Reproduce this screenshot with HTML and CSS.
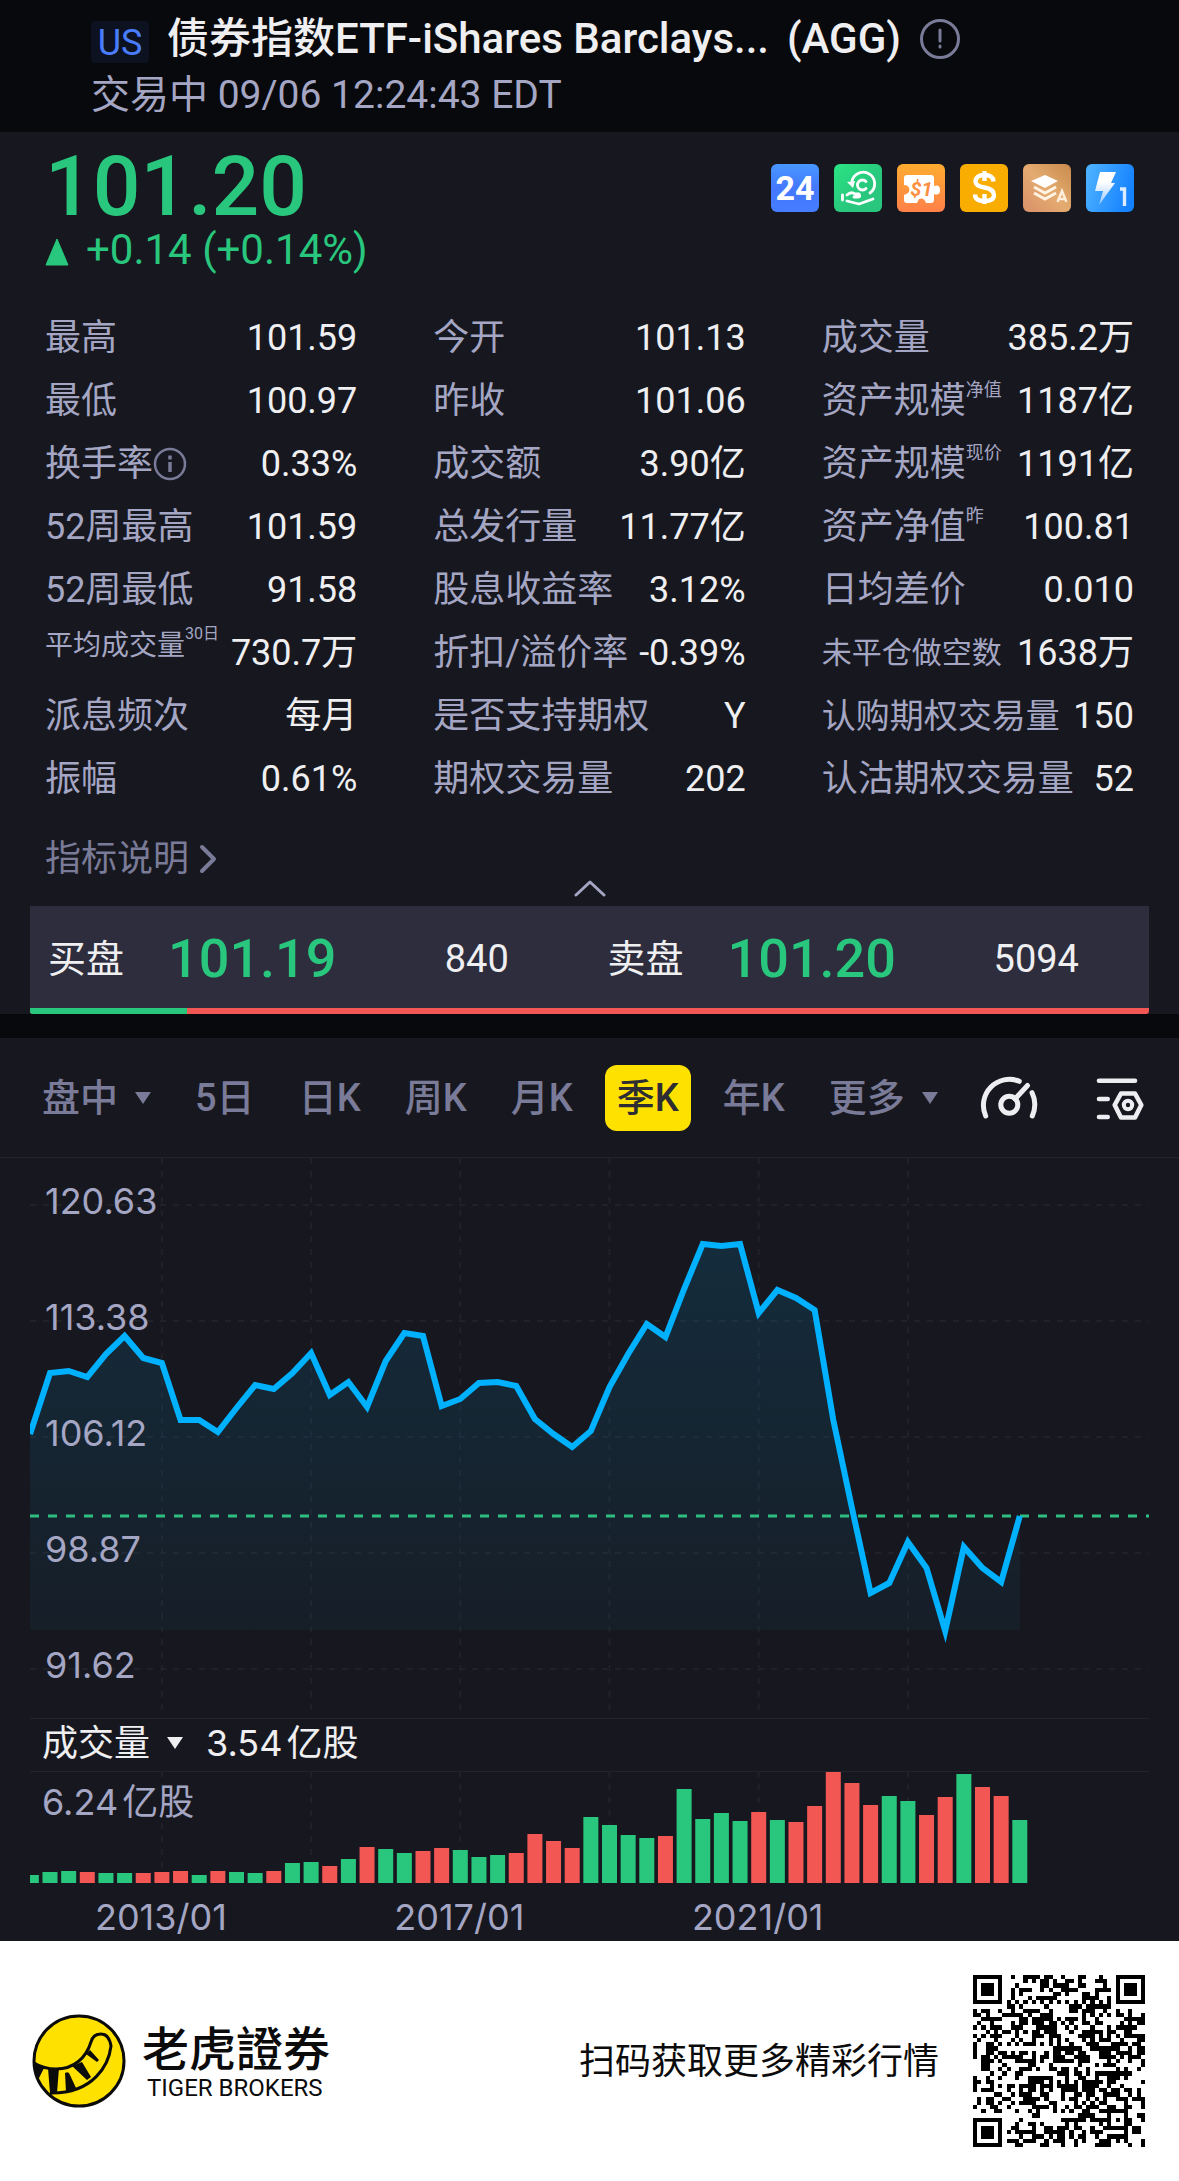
FILE: index.html
```html
<!DOCTYPE html>
<html lang="zh-CN">
<head>
<meta charset="utf-8">
<meta name="viewport" content="width=device-width, initial-scale=1">
<title>AGG</title>
<link rel="stylesheet" href="styles.css">
</head>
<body>
<header class="top">
  <div class="top-title">
    <span class="market">US</span>
    <h1 class="name">债券指数ETF-iShares Barclays...</h1>
    <span class="name">(AGG)</span>
    <svg class="info-lg" viewBox="0 0 42 42" fill="none" stroke="#7a7b98" stroke-width="3" stroke-linecap="round"><circle cx="21" cy="21" r="18.5"/><path d="M21 12v11M21 28v1"/></svg>
  </div>
  <p class="status">交易中 09/06 12:24:43 EDT</p>
</header>

<main>
<section class="quote">
  <div class="quote-head">
    <div>
      <p class="price">101.20</p>
      <p class="change"><svg class="up" viewBox="0 0 24 28"><path d="M12 1 23 27H1z" fill="#28c77d" stroke="#28c77d" stroke-linejoin="round"/></svg>+0.14 (+0.14%)</p>
    </div>
    <div class="badges">
      <svg class="badge" viewBox="0 0 48 48"><defs><linearGradient id="b1" x1="0" y1="0" x2="0" y2="1"><stop offset="0" stop-color="#4798ff"/><stop offset=".5" stop-color="#4478ff"/><stop offset="1" stop-color="#467dff"/></linearGradient></defs><rect width="48" height="48" rx="6" fill="url(#b1)"/><text x="24" y="36" text-anchor="middle" class="badge-24">24</text></svg>
      <svg class="badge" viewBox="0 0 48 48"><defs><linearGradient id="b2" x1="0" y1="0" x2="1" y2="1"><stop offset="0" stop-color="#2be583"/><stop offset=".6" stop-color="#28c77d"/></linearGradient></defs><rect width="48" height="48" rx="6" fill="url(#b2)"/><g fill="none" stroke="#fff" stroke-width="2.8" stroke-linecap="round" stroke-linejoin="round"><path d="M18 17a11.500 11.500 0 1 1 18 12"/><path d="M32 17.500a5 5 0 1 0 0 7"/><path d="M8.500 31v5M13 31q4-4 8-1h4q2 3-1 3h-4M13 37l12 3 14-5"/></g><path d="M13 18l8-1-2 7z" fill="#fff"/></svg>
      <svg class="badge" viewBox="0 0 48 48"><defs><linearGradient id="b3" x1="0" y1="0" x2="0" y2="1"><stop offset="0" stop-color="#ffac30"/><stop offset="1" stop-color="#ff8048"/></linearGradient></defs><rect width="48" height="48" rx="6" fill="url(#b3)"/><path fill="#fff" d="M10 11H34Q37 11 37 14V22Q43 20 43 26T37 30V36Q37 39 34 39H29Q27 33 22 35L20 39H10Q7 39 7 36V31Q14 29 12 24Q11 21 7 21V14Q7 11 10 11z"/><text x="24.500" y="32" text-anchor="middle" class="badge-s1">$1</text></svg>
      <svg class="badge" viewBox="0 0 48 48"><rect width="48" height="48" rx="6" fill="#f9ad00"/><g fill="none" stroke="#fff" stroke-width="4.400"><path d="M33.500 17.500Q33 11 24.500 11T15.500 17.500Q15.500 22 24.500 23.500T34 31Q34 37 24.500 37T15 30.500"/><path d="M24.500 7v10M24.500 30v10"/></g></svg>
      <svg class="badge" viewBox="0 0 48 48"><defs><linearGradient id="b5" x1="0" y1="1" x2="1" y2="0"><stop offset="0" stop-color="#d9906a"/><stop offset=".5" stop-color="#e4ab70"/><stop offset="1" stop-color="#c98a4c"/></linearGradient></defs><rect width="48" height="48" rx="6" fill="url(#b5)"/><path d="M22 11 35 17 22 24 8 17z" fill="#fff"/><g fill="none" stroke="#fff3e4" stroke-width="3"><path d="M11 23l11 6 11-6M11 29l11 6 11-6"/></g><path d="M34.500 38l4.500-11 4.500 11M36 35h6" fill="none" stroke="#ffeedb" stroke-width="2.400"/></svg>
      <svg class="badge" viewBox="0 0 48 48"><defs><linearGradient id="b6" x1="0" y1=".2" x2="1" y2=".5"><stop offset="0" stop-color="#4db2ff"/><stop offset="1" stop-color="#1481ff"/></linearGradient><linearGradient id="b6b" x1="0" y1="0" x2="0" y2="1"><stop offset=".3" stop-color="#fff"/><stop offset="1" stop-color="#9cc8ff"/></linearGradient></defs><rect width="48" height="48" rx="6" fill="url(#b6)"/><path d="M14 8H30L25 19H29L13 41 17 27H9z" fill="url(#b6b)"/><path d="M34 25h4.500v17" fill="none" stroke="#dcecff" stroke-width="3.400"/></svg>
    </div>
  </div>

  <dl class="stats">
    <div class="stat"><dt>最高</dt><dd>101.59</dd></div>
    <div class="stat"><dt>今开</dt><dd>101.13</dd></div>
    <div class="stat"><dt>成交量</dt><dd>385.2万</dd></div>
    <div class="stat"><dt>最低</dt><dd>100.97</dd></div>
    <div class="stat"><dt>昨收</dt><dd>101.06</dd></div>
    <div class="stat"><dt>资产规模<small>净值</small></dt><dd>1187亿</dd></div>
    <div class="stat"><dt>换手率<svg class="info-sm" viewBox="0 0 34 34" fill="none" stroke="#7a7b98" stroke-width="2.500"><circle cx="17" cy="17" r="15"/><path d="M17 15v10M17 8.500v4" stroke-width="3.500"/></svg></dt><dd>0.33%</dd></div>
    <div class="stat"><dt>成交额</dt><dd>3.90亿</dd></div>
    <div class="stat"><dt>资产规模<small>现价</small></dt><dd>1191亿</dd></div>
    <div class="stat"><dt>52周最高</dt><dd>101.59</dd></div>
    <div class="stat"><dt>总发行量</dt><dd>11.77亿</dd></div>
    <div class="stat"><dt>资产净值<small>昨</small></dt><dd>100.81</dd></div>
    <div class="stat"><dt>52周最低</dt><dd>91.58</dd></div>
    <div class="stat"><dt>股息收益率</dt><dd>3.12%</dd></div>
    <div class="stat"><dt>日均差价</dt><dd>0.010</dd></div>
    <div class="stat"><dt class="fit-s">平均成交量<small>30日</small></dt><dd>730.7万</dd></div>
    <div class="stat"><dt>折扣/溢价率</dt><dd>-0.39%</dd></div>
    <div class="stat"><dt class="fit-m">未平仓做空数</dt><dd>1638万</dd></div>
    <div class="stat"><dt>派息频次</dt><dd>每月</dd></div>
    <div class="stat"><dt>是否支持期权</dt><dd>Y</dd></div>
    <div class="stat"><dt class="fit-l">认购期权交易量</dt><dd>150</dd></div>
    <div class="stat"><dt>振幅</dt><dd>0.61%</dd></div>
    <div class="stat"><dt>期权交易量</dt><dd>202</dd></div>
    <div class="stat"><dt>认沽期权交易量</dt><dd>52</dd></div>
  </dl>

  <a class="explain" href="#">指标说明<svg class="chev" viewBox="0 0 18 30" fill="none" stroke="#7a7b98" stroke-width="4" stroke-linecap="round" stroke-linejoin="round"><path d="M3 3l12 12L3 27"/></svg></a>
  <button class="collapse" type="button" aria-label="收起"><svg viewBox="0 0 32 18" fill="none" stroke="#a4a6c4" stroke-width="3" stroke-linecap="round" stroke-linejoin="round"><path d="M2 16 16 3 30 16"/></svg></button>

  <div class="book">
    <div class="side"><span>买盘</span><strong>101.19</strong><span class="size">840</span></div>
    <div class="side"><span>卖盘</span><strong>101.20</strong><span class="size">5094</span></div>
  </div>
  <div class="ratio"><div class="ratio-buy" style="width:14%"></div></div>
</section>

<section class="charts">
  <nav class="periods">
    <button type="button" class="tab">盘中<svg class="tri" viewBox="0 0 16 12"><path d="M0 0h16L8 12z"/></svg></button>
    <button type="button" class="tab">5日</button>
    <button type="button" class="tab">日K</button>
    <button type="button" class="tab">周K</button>
    <button type="button" class="tab">月K</button>
    <button type="button" class="tab tab-on">季K</button>
    <button type="button" class="tab">年K</button>
    <button type="button" class="tab">更多<svg class="tri" viewBox="0 0 16 12"><path d="M0 0h16L8 12z"/></svg></button>
    <div class="tools">
      <button type="button" class="tool" aria-label="指标"><svg viewBox="0 0 62 48" fill="none" stroke="#eeeef2" stroke-width="5" stroke-linecap="round"><path d="M7.700 42A26 26 0 0 1 41.300 7.300M54 18.700Q59.500 30 54.300 42M37 25 49.500 11.500"/><circle cx="31.300" cy="30.700" r="8.500"/></svg></button>
      <button type="button" class="tool" aria-label="设置"><svg viewBox="0 0 52 48" fill="none" stroke="#eeeef2" stroke-width="4.600" stroke-linecap="round" stroke-linejoin="round"><path d="M6 6.700H42M6 25h8.700M6 43h8.700M21.700 31 28 19.500H42L48.300 31 42 43.500H28z"/><circle cx="35" cy="31" r="4.200" stroke-width="4"/></svg></button>
    </div>
  </nav>

  <div class="plots">
    <svg id="price" class="plot" viewBox="0 0 1119 560"></svg>
    <div class="vol-head"><button type="button" class="vol-name">成交量<svg class="tri" viewBox="0 0 16 12"><path d="M0 0h16L8 12z"/></svg></button><span class="amount"><span>3.54</span><span>亿股</span></span></div>
    <svg id="volume" class="plot" viewBox="0 0 1119 170"></svg>
  </div>
</section>
</main>

<footer class="foot">
  <svg class="logo" viewBox="0 0 94 94"><circle cx="47" cy="47" r="45" fill="#ffe100" stroke="#0b0b0b" stroke-width="3"/><path d="M2 49Q12 55 24 55C42 55 54 44 59 28Q61 20 69 20T79 32C77 50 62 80 18 79" fill="none" stroke="#0b0b0b" stroke-width="3"/><path d="M2 49 12 54 6 66zM16 54h11l-2 25h-7zM33 59q4-2 5 2l6 13-10 4zM40 52l10-4 9 15-4 3zM54 40l4-4 9 10-2 2z" fill="#0b0b0b"/></svg>
  <div class="brand"><span class="brand-zh">老虎證券</span><span class="brand-en">TIGER BROKERS</span></div>
  <p class="scan">扫码获取更多精彩行情</p>
  <svg id="qr" class="qr" viewBox="0 0 41 41" shape-rendering="crispEdges"></svg>
</footer>
<script src="app.js"></script>
</body>
</html>
```
FILE: styles.css
```css
* { box-sizing: border-box; margin: 0; padding: 0; }
body {
  background: #08090c;
  color: #efeff2;
  font-family: Roboto, "Noto Sans CJK SC", sans-serif;
  font-size: 36px;
}
svg { display: block; flex: none; }
button { border: 0; background: none; color: inherit; font: inherit; cursor: pointer; }
a { color: inherit; text-decoration: none; }

.top { height: 132px; padding: 14px 91px 0; }
.top-title { display: flex; align-items: center; gap: 18px; height: 50px; }
.market {
  width: 58px; height: 42px; margin-top: 6px; border-radius: 4px;
  background: #0c1220; color: #4a7dfc;
  font-size: 36px; line-height: 44px; text-align: center;
}
.name { font-size: 42px; line-height: 50px; font-weight: 500; white-space: nowrap; }
.info-lg { width: 42px; height: 42px; }
.status { font-size: 39px; line-height: 62px; color: #a4a6c4; }

.quote { background: #17181f; padding: 0 30px; }
.quote-head { display: flex; justify-content: space-between; padding: 17px 15px 0 15px; height: 174px; }
.price { font-size: 84px; line-height: 76px; font-weight: 500; color: #28c77d; }
.change { display: flex; align-items: center; gap: 17px; font-size: 42px; line-height: 50px; color: #28c77d; }
.up { width: 24px; height: 28px; margin-top: 4px; }
.badges { display: flex; gap: 15px; padding-top: 15px; }
.badge { width: 48px; height: 48px; }
.badge-24 { fill: #fff; font-size: 34px; font-weight: 700; }
.badge-s1 { fill: #ff8f40; font-size: 20px; font-weight: 700; font-style: italic; }

.stats { display: grid; grid-template-columns: repeat(3, 1fr); column-gap: 76px; padding: 0 15px; }
.stat { display: flex; justify-content: space-between; align-items: center; height: 63px; line-height: 54px; white-space: nowrap; }
.stat dt { display: flex; align-items: center; color: #a4a6c4; }
.stat small { align-self: flex-start; font-size: 18px; line-height: 32px; }
.stat .fit-s { font-size: 28px; line-height: 50px; align-self: flex-start; }
.stat .fit-s small { font-size: 16px; line-height: 26px; }
.stat .fit-m { font-size: 30px; }
.stat .fit-l { font-size: 34px; }
.info-sm { width: 34px; height: 34px; }

.explain { display: flex; width: max-content; align-items: center; gap: 10px; margin: 22px 0 0 15px; height: 54px; line-height: 54px; color: #7a7b98; }
.chev { width: 18px; height: 30px; }
.collapse { display: block; width: 32px; height: 18px; margin: -7px auto 9px; }

.book { display: grid; grid-template-columns: 1fr 1fr; height: 102px; background: #2d2d3d; }
.side { display: grid; grid-template-columns: 120px 196px 1fr; align-items: center; padding: 4px 0 0 18px; font-size: 38px; line-height: 56px; }
.side strong { font-size: 54px; font-weight: 500; color: #28c77d; }
.size { text-align: center; }
.ratio { height: 6px; border-radius: 0 0 3px 3px; overflow: hidden; background: #f25754; }
.ratio-buy { height: 6px; background: #28c77d; }

.charts { margin-top: 24px; background: #17181f; }
.periods { display: flex; align-items: center; gap: 20px; height: 120px; padding: 0 30px; border-bottom: 1px solid #22232b; }
.tab { display: flex; align-items: center; gap: 17px; height: 66px; padding: 0 12px; border-radius: 12px; color: #7a7b98; font-size: 38px; line-height: 66px; font-weight: 500; white-space: nowrap; }
.tab-on { background: #ffe100; color: #2d2d33; }
.tri { width: 16px; height: 12px; fill: currentColor; }
.tools { display: flex; flex: 1; justify-content: space-between; padding: 1px 4px 0 8px; }
.tool svg { width: auto; height: 48px; }

.plots { padding: 0 30px; font-family: Inter, "Noto Sans CJK SC", sans-serif; }
.plot { width: 100%; height: auto; }
.plot text { font-size: 36px; fill: #a4a6c4; }
.grid { stroke: #202129; stroke-width: 2; stroke-dasharray: 6 7; }
.rule { stroke: #22232b; stroke-width: 1; }
.last { stroke: #2fbd82; stroke-width: 3; stroke-dasharray: 9 9; }
.line { fill: none; stroke: #00b1ff; stroke-width: 6; stroke-linejoin: miter; }
.vol-head { display: flex; align-items: center; gap: 23px; height: 53px; padding: 0 0 4px 12px; line-height: 49px; border-top: 1px solid #22232b; }
.vol-name { display: flex; align-items: center; gap: 17px; }
.amount { display: flex; gap: 4px; }
.g { fill: #28c77d; }
.r { fill: #f25754; }

.foot { display: flex; align-items: center; padding: 34px 34px 34px 32px; background: #fff; color: #0b0b0b; }
.logo { width: 94px; height: 94px; }
.brand { display: flex; flex-direction: column; margin-left: 16px; }
.brand-zh { font-family: "Noto Sans CJK TC", sans-serif; font-size: 47px; line-height: 54px; font-weight: 500; }
.brand-en { padding-left: 5px; font-size: 24px; line-height: 30px; }
.scan { margin-left: auto; padding-bottom: 6px; }
.qr { width: 172px; height: 172px; margin-left: 34px; }
```
FILE: app.js
```js
const STEP = 18.65;
const X0 = 1.35;
const cx = i => X0 + i * STEP;

const prices = [272,215,213,219,196,178,200,205,262,262,274,250,227,231,215,195,237,224,249,203,175,178,248,241,225,224,228,261,276,289,273,229,196,166,179,131,86,88,86,155,132,140,152,262,350,435,425,384,410,473,389,410,424,358];
const volumes = [8,11,12,11,10,10,10,11,12,8,12,11,10,12,20,21,17,24,36,34,30,32,35,33,26,28,30,49,42,35,66,58,48,45,47,94,64,70,62,71,63,61,77,111,100,78,87,82,68,86,109,96,87,63];
const colors = 'GGGRGGRRRGRGGRGGRGRGGRRGGGRRRRGGGGRGGGGRGRRRRRGGRRGRRG';
const ticks = [['120.63', 47], ['113.38', 163], ['106.12', 279], ['98.87', 395], ['91.62', 511]];
const columns = [7, 15, 23, 31, 39, 47];

const pts = prices.map((y, i) => `${cx(i)},${y}`).join(' ');
document.getElementById('price').innerHTML =
  '<defs><linearGradient id="area" x1="0" y1="0" x2="0" y2="1"><stop offset="0" stop-color="#00b1ff" stop-opacity=".13"/><stop offset="1" stop-color="#00b1ff" stop-opacity=".04"/></linearGradient></defs>' +
  ticks.map(t => `<line class="grid" x1="0" x2="1119" y1="${t[1]}" y2="${t[1]}"/>`).join('') +
  columns.map(i => `<line class="grid" x1="${cx(i)}" x2="${cx(i)}" y1="0" y2="558"/>`).join('') +
  `<polygon fill="url(#area)" points="0,472 0,276 ${pts} ${cx(53)},472"/>` +
  `<line class="last" x1="0" x2="1119" y1="358" y2="358"/>` +
  `<polyline class="line" points="0,276 ${pts}"/>` +
  ticks.map(t => `<text x="15" y="${t[1] + 9}">${t[0]}</text>`).join('');

document.getElementById('volume').innerHTML =
  '<line class="rule" x1="0" x2="1119" y1="0.5" y2="0.5"/>' +
  columns.map(i => `<line class="grid" x1="${cx(i)}" x2="${cx(i)}" y1="0" y2="112"/>`).join('') +
  volumes.map((v, i) => `<rect class="${colors[i].toLowerCase()}" x="${cx(i) - 7.5}" y="${112 - v}" width="15" height="${v}"/>`).join('') +
  '<text x="12" y="44">6.24<tspan dx="4">亿股</tspan></text>' +
  [['2013/01', 7], ['2017/01', 23], ['2021/01', 39]].map(d => `<text x="${cx(d[1]) - 1}" y="159" text-anchor="middle">${d[0]}</text>`).join('');

/* QR code: finder, timing and alignment patterns around the data modules */
const N = 41;
let seed = 20240906;
const bit = () => (seed = (seed * 1103515245 + 12345) % 2147483648) > 1073741824;
const ring = (x, y, x0, y0, c) => {
  const d = Math.max(Math.abs(x - x0), Math.abs(y - y0));
  return d > c + 1 ? null : c === 3 ? d !== 2 && d !== 4 : d !== 1;
};
let qr = '';
for (let y = 0; y < N; y++) {
  for (let x = 0; x < N; x++) {
    let on = bit();
    if (x === 6) on = y % 2 === 0;
    if (y === 6) on = x % 2 === 0;
    [[3, 3], [37, 3], [3, 37]].forEach(f => { const r = ring(x, y, f[0], f[1], 3); if (r !== null) on = r; });
    const a = ring(x, y, 34, 34, 1);
    if (a !== null) on = a;
    if (on) qr += `M${x} ${y}h1v1h-1z`;
  }
}
document.getElementById('qr').innerHTML = `<path d="${qr}"/>`;
```
